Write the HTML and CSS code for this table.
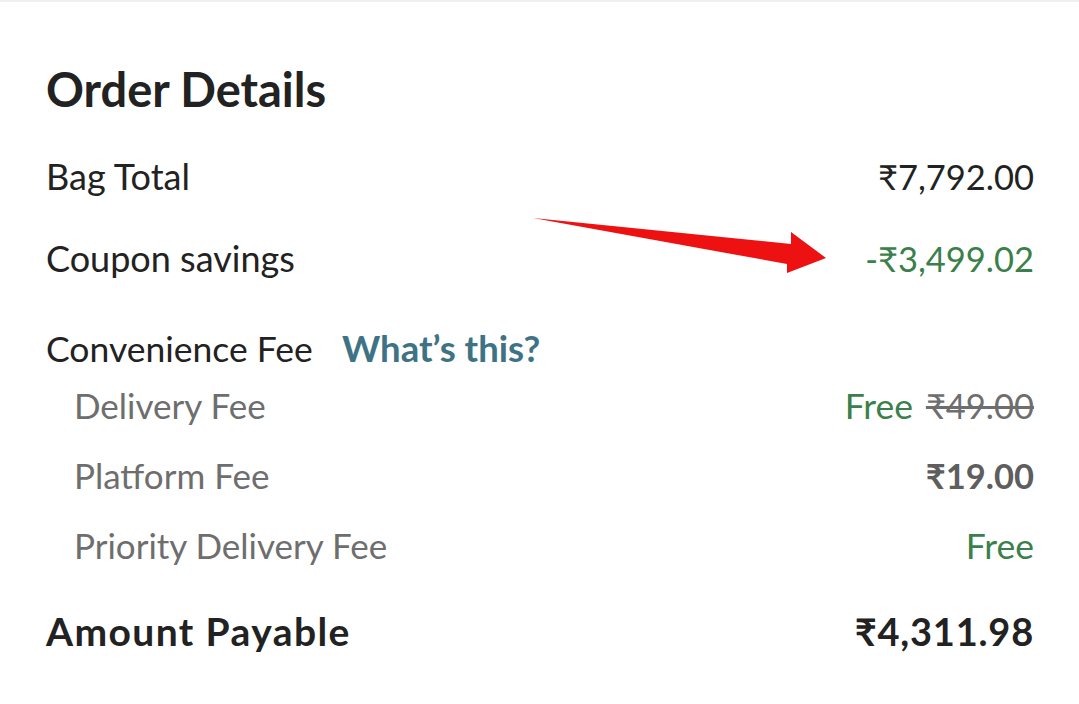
FILE: index.html
```html
<!DOCTYPE html>
<html lang="en">
<head>
<meta charset="utf-8">
<link rel="stylesheet" href="styles.css">
</head>
<body>
<div class="page">
  <h1 class="title">Order Details</h1>
  <div class="row r-bag">
    <span class="label">Bag Total</span>
    <span class="amount">₹7,792.00</span>
  </div>
  <div class="row r-coupon">
    <span class="label">Coupon savings</span>
    <span class="amount green">-₹3,499.02</span>
  </div>
  <div class="row r-conv">
    <span class="label">Convenience Fee <span class="link">What’s this?</span></span>
  </div>
  <div class="row sub r-del">
    <span class="label">Delivery Fee</span>
    <span class="amount"><span class="green free gap">Free</span> <s class="strike">₹49.00</s></span>
  </div>
  <div class="row sub r-plat">
    <span class="label">Platform Fee</span>
    <span class="amount bold">₹19.00</span>
  </div>
  <div class="row sub r-pri">
    <span class="label">Priority Delivery Fee</span>
    <span class="amount green free">Free</span>
  </div>
  <div class="row total">
    <span class="label">Amount Payable</span>
    <span class="amount">₹4,311.98</span>
  </div>
  <svg class="arrow" width="1079" height="704" viewBox="0 0 1079 704">
    <polygon points="533,218 791,244 791,232 826,258 787,273 787,264" fill="#ee1111"/>
  </svg>
</div>
</body>
</html>
```

FILE: styles.css
```css
html, body {
  margin: 0;
  padding: 0;
  background: #fff;
}
body {
  border-top: 2px solid #efefef;
  font-family: "Lato", "Open Sans", sans-serif;
  color: #222;
}
.page {
  position: relative;
  padding: 0 45px 0 46px;
  height: 702px;
  box-sizing: border-box;
}
.title {
  margin: 0;
  padding-top: 61px;
  font-size: 47px;
  line-height: 52px;
  font-weight: 700;
  color: #222;
}
.row {
  display: flex;
  justify-content: space-between;
  align-items: center;
  height: 60px;
  font-size: 36px;
}
.row .amount { font-size: 34.5px; }
.r-bag { margin-top: 31px; }
.r-coupon { margin-top: 22px; }
.r-conv { margin-top: 30px; }
.sub { height: 70px; padding-left: 28px; color: #6e6e6e; font-size: 35px; }
.r-conv { font-size: 35.5px; }
.r-del { margin-top: -8px; }
.total {
  margin-top: 21px;
  font-weight: 700;
}
.total .label { font-size: 39px; letter-spacing: 1.4px; }
.row.total .amount { font-size: 38px; letter-spacing: 0.8px; }
.link {
  margin-left: 20px;
  color: #3e7385;
  font-weight: 700;
  font-size: 36.5px;
}
.green { color: #3b7f4a; }
.row .free { font-size: 35.5px; }
.row .gap { margin-right: 4px; }
.bold { font-weight: 700; color: #5e5e5e; }
.strike { color: #6e6e6e; }
.amount { white-space: nowrap; }
.arrow {
  position: absolute;
  left: 0;
  top: -2px;
  pointer-events: none;
}
```
